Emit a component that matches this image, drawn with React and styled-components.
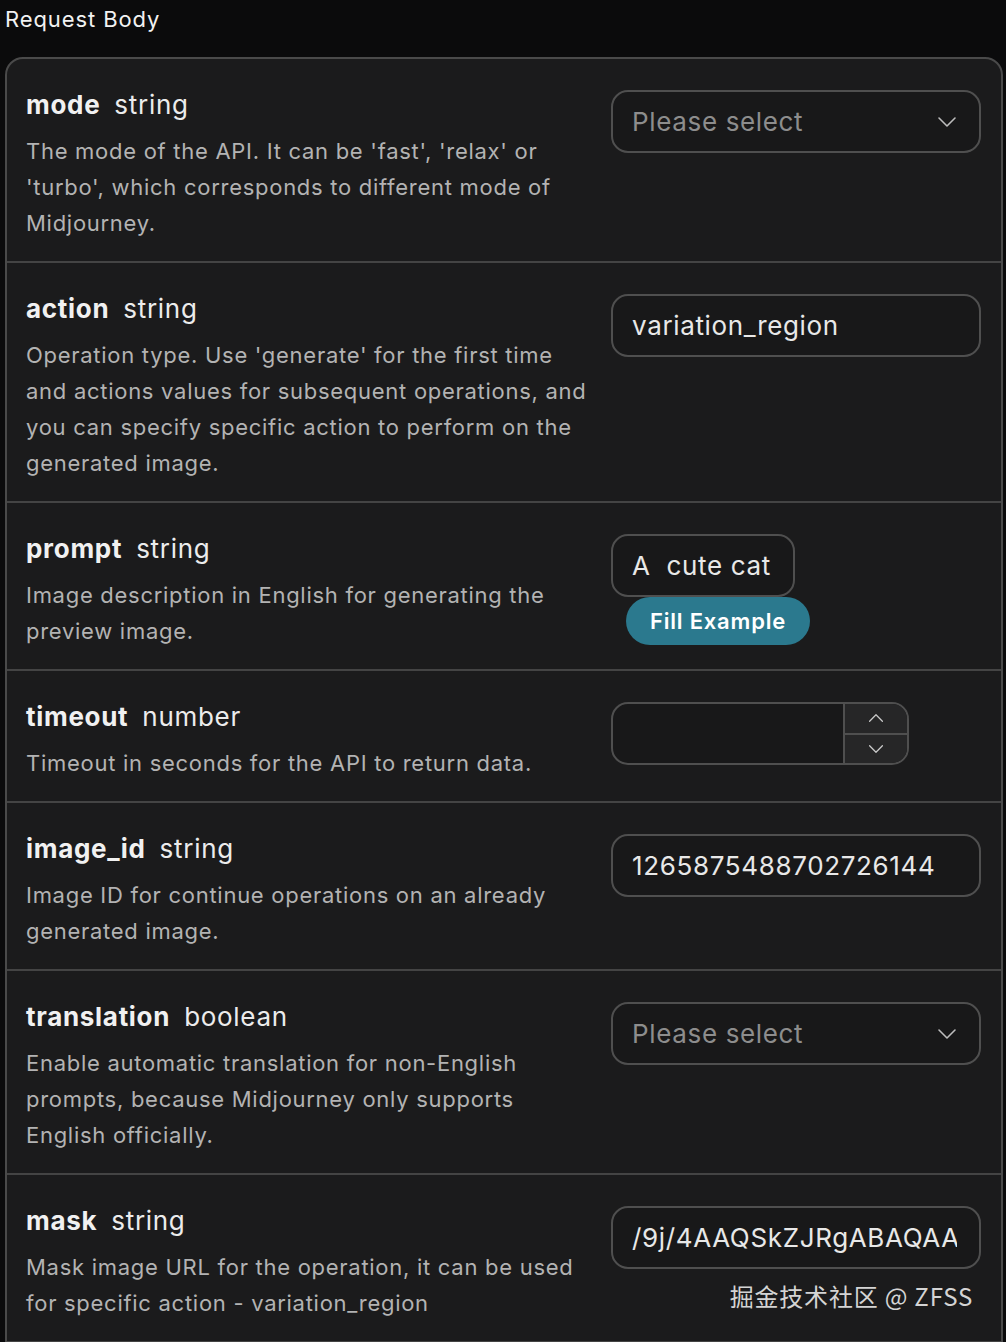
import React from "react";
import styled, { createGlobalStyle } from "styled-components";

const GlobalStyle = createGlobalStyle`
  html, body {
    margin: 0;
    padding: 0;
    background: #0b0b0c;
    overflow: hidden;
  }
  body {
    font-family: Inter, "Noto Sans", "Noto Sans CJK SC", sans-serif;
    -webkit-font-smoothing: antialiased;
  }
`;

const Page = styled.div`
  position: relative;
  width: 1006px;
  height: 1342px;
  overflow: hidden;
  background: #0b0b0c;
`;

const Heading = styled.div`
  height: 38px;
  line-height: 38px;
  padding-left: 5px;
  font-size: 22px;
  letter-spacing: 0.9px;
  color: #f2f2f2;
  margin-bottom: 19px;
`;

const Card = styled.div`
  margin: 0 3px 0 5px;
  background: #1b1b1c;
  border: 2px solid #4a4a4a;
  border-radius: 18px;
  padding-bottom: 60px;
`;

const Row = styled.div`
  display: grid;
  grid-template-columns: 1fr 370px;
  column-gap: 11px;
  padding: 28px 20px 20px 19px;
  border-top: ${(p) => (p.first ? "none" : "2px solid #444")};
  border-bottom: ${(p) => (p.last ? "2px solid #444" : "none")};
`;

const Info = styled.div`
  display: flex;
  flex-direction: column;
  min-width: 0;
`;

const Title = styled.div`
  display: flex;
  gap: 14px;
  line-height: 36px;
  font-size: 26px;
  letter-spacing: 0.7px;
  color: #ececec;
`;

const Name = styled.span`
  font-weight: 700;
  color: #f1f1f1;
`;

const Type = styled.span`
  font-weight: 400;
`;

const Desc = styled.p`
  margin: 10px 0 0;
  font-size: 22px;
  line-height: 36px;
  letter-spacing: 0.72px;
  color: #b3b3b3;
`;

const Control = styled.div`
  display: flex;
  flex-direction: column;
  align-items: flex-start;
  padding-top: 3px;
  min-width: 0;
`;

const Field = styled.div`
  box-sizing: border-box;
  display: flex;
  align-items: center;
  justify-content: space-between;
  width: ${(p) => p.width || "370px"};
  height: 63px;
  padding: 0 22px 0 19px;
  border: 2px solid #4f4f4f;
  border-radius: 17px;
  background: #181819;
  font-size: 26px;
  letter-spacing: 0.65px;
  color: ${(p) => (p.placeholder ? "#8d8d8d" : "#e8e8e8")};
  white-space: pre;
  overflow: hidden;
`;

const Clip = styled.span`
  flex: 1;
  min-width: 0;
  overflow: hidden;
  white-space: nowrap;
`;

const FillButton = styled.button`
  margin-left: 15px;
  width: 184px;
  height: 48px;
  border: none;
  border-radius: 24px;
  background: #2b798e;
  color: #ffffff;
  font-family: inherit;
  font-size: 22px;
  font-weight: 600;
  letter-spacing: 0.8px;
  cursor: pointer;
`;

const NumberBox = styled.div`
  box-sizing: border-box;
  display: flex;
  width: 298px;
  height: 63px;
  border: 2px solid #4f4f4f;
  border-radius: 17px;
  background: #181819;
  overflow: hidden;
`;

const NumberValue = styled.div`
  flex: 1;
`;

const Spinner = styled.div`
  display: flex;
  flex-direction: column;
  width: 62px;
  border-left: 2px solid #4f4f4f;
  background: #262627;
`;

const SpinHalf = styled.div`
  flex: 1;
  display: flex;
  align-items: center;
  justify-content: center;
  border-top: ${(p) => (p.bottom ? "2px solid #4f4f4f" : "none")};
`;

const Watermark = styled.div`
  position: absolute;
  right: 33px;
  top: 1280px;
  font-family: "Noto Sans CJK SC", Inter, sans-serif;
  font-size: 24px;
  line-height: 32px;
  letter-spacing: 0.8px;
  color: #d4d4d4;
`;

const Chevron = ({ up, size = 20, color = "#bdbdbd" }) => (
  <svg width={size} height={size / 2 + 2} viewBox="0 0 20 12" fill="none">
    <path
      d={up ? "M2 10 L10 2 L18 10" : "M2 2 L10 10 L18 2"}
      stroke={color}
      strokeWidth="1.6"
      strokeLinecap="round"
      strokeLinejoin="round"
    />
  </svg>
);

const Select = () => (
  <Field placeholder="true">
    <span>Please select</span>
    <Chevron />
  </Field>
);

const params = [
  {
    name: "mode",
    type: "string",
    desc: "The mode of the API. It can be 'fast', 'relax' or 'turbo', which corresponds to different mode of Midjourney.",
    control: "select",
  },
  {
    name: "action",
    type: "string",
    desc: "Operation type. Use 'generate' for the first time and actions values for subsequent operations, and you can specify specific action to perform on the generated image.",
    control: "text",
    value: "variation_region",
  },
  {
    name: "prompt",
    type: "string",
    desc: "Image description in English for generating the preview image.",
    control: "prompt",
    value: "A  cute cat",
  },
  {
    name: "timeout",
    type: "number",
    desc: "Timeout in seconds for the API to return data.",
    control: "number",
  },
  {
    name: "image_id",
    type: "string",
    desc: "Image ID for continue operations on an already generated image.",
    control: "text",
    value: "1265875488702726144",
  },
  {
    name: "translation",
    type: "boolean",
    desc: "Enable automatic translation for non-English prompts, because Midjourney only supports English officially.",
    control: "select",
  },
  {
    name: "mask",
    type: "string",
    desc: "Mask image URL for the operation, it can be used for specific action - variation_region",
    control: "text",
    value: "/9j/4AAQSkZJRgABAQAA",
  },
];

const renderControl = (item) => {
  if (item.control === "select") return <Select />;
  if (item.control === "prompt")
    return (
      <>
        <Field width="184px">{item.value}</Field>
        <FillButton>Fill Example</FillButton>
      </>
    );
  if (item.control === "number")
    return (
      <NumberBox>
        <NumberValue />
        <Spinner>
          <SpinHalf>
            <Chevron up size={16} color="#c8c8c8" />
          </SpinHalf>
          <SpinHalf bottom>
            <Chevron size={16} color="#c8c8c8" />
          </SpinHalf>
        </Spinner>
      </NumberBox>
    );
  return (
    <Field>
      <Clip>{item.value}</Clip>
    </Field>
  );
};

const App = () => (
  <Page>
    <GlobalStyle />
    <Heading>Request Body</Heading>
    <Card>
      {params.map((item, i) => (
        <Row key={item.name} first={i === 0} last={i === params.length - 1}>
          <Info>
            <Title>
              <Name>{item.name}</Name>
              <Type>{item.type}</Type>
            </Title>
            <Desc>{item.desc}</Desc>
          </Info>
          <Control>{renderControl(item)}</Control>
        </Row>
      ))}
    </Card>
    <Watermark>掘金技术社区 @ ZFSS</Watermark>
  </Page>
);

export default App;
